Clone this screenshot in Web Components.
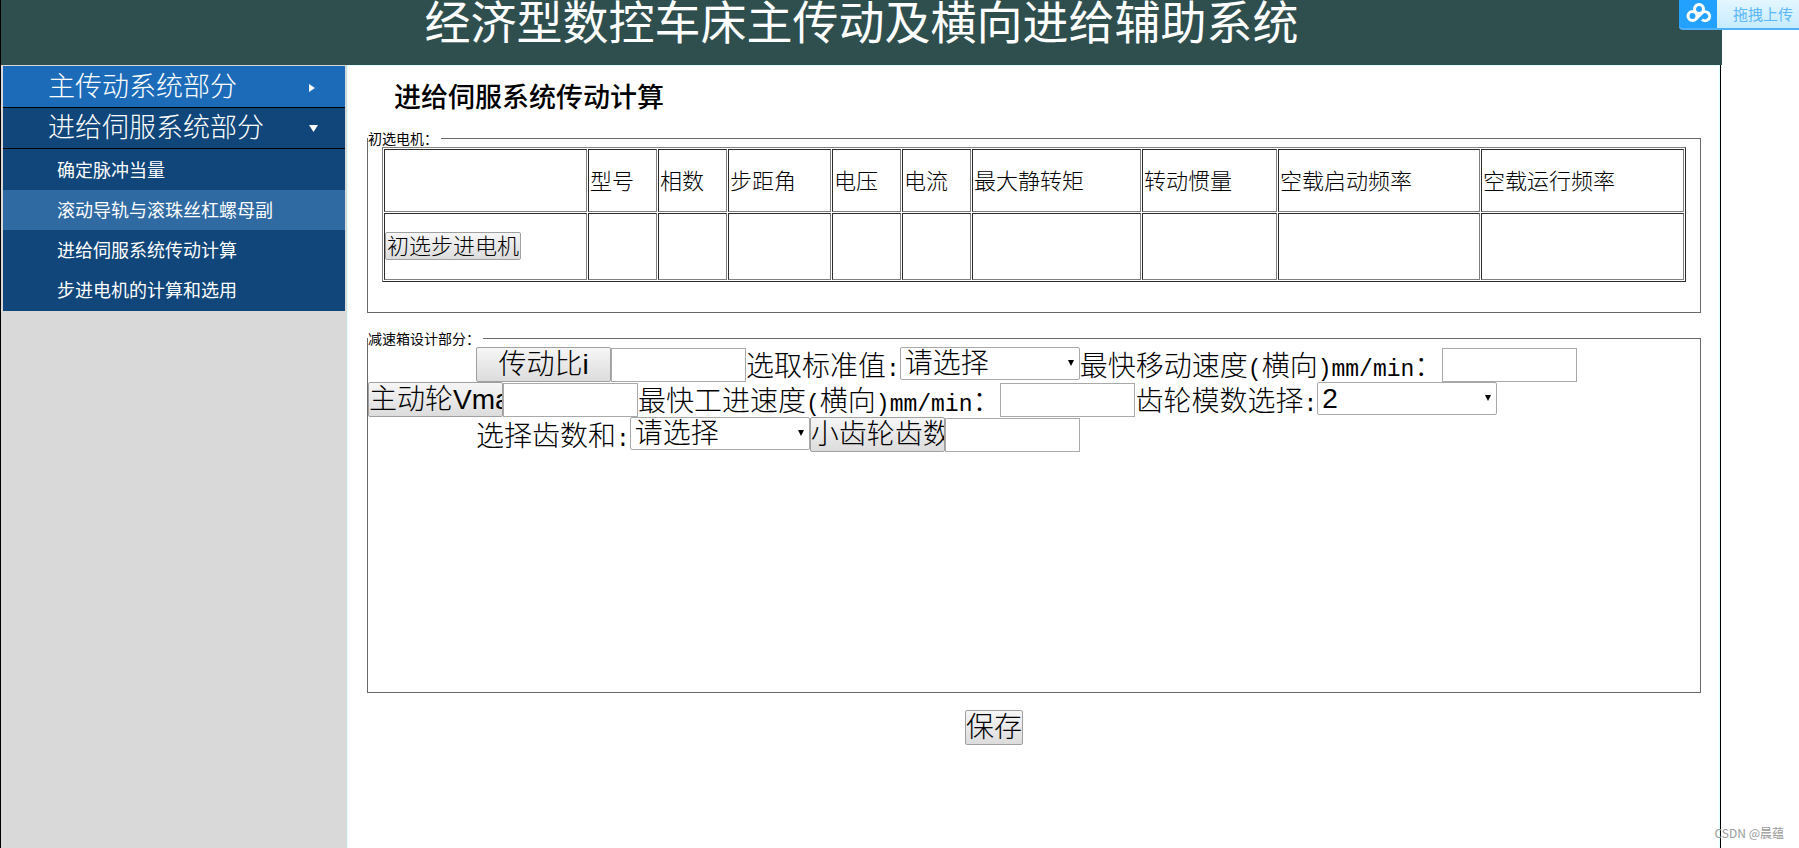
<!DOCTYPE html>
<html lang="zh-CN">
<head>
<meta charset="utf-8">
<title>经济型数控车床主传动及横向进给辅助系统</title>
<style>
    html, body {
        margin: 0;
        min-height: 100%;
    }
    body {
        background: #fff;
        color: #000;
        font-family: "Noto Sans CJK SC", sans-serif;
        font-weight: 300;
    }
</style>
</head>
<body>
<app-shell>
    <side-menu slot="menu">
        <menu-group label="主传动系统部分" active></menu-group>
        <menu-group label="进给伺服系统部分" open>
            <menu-link label="确定脉冲当量"></menu-link>
            <menu-link label="滚动导轨与滚珠丝杠螺母副" current></menu-link>
            <menu-link label="进给伺服系统传动计算"></menu-link>
            <menu-link label="步进电机的计算和选用"></menu-link>
        </menu-group>
    </side-menu>
    <feed-form></feed-form>
</app-shell>
<upload-badge></upload-badge>
<page-mark></page-mark>

<script>
    class BaseElement extends HTMLElement {
        constructor() {
            super();
            this.attachShadow({mode: 'open', delegatesFocus: true});
        }

        connectedCallback() {
            this.shadowRoot.innerHTML = this.getStyle() + this.getTemplate();
        }
    }

    class AppShell extends BaseElement {
        getStyle() {
            return `
                <style>
                    :host {
                        display: flex;
                        flex-direction: column;
                        box-sizing: border-box;
                        min-height: 100vh;
                        margin-right: 77px;
                        border-left: 1px solid #000;
                    }
                    header {
                        padding-bottom: 27px;
                        background: #2f4f4f;
                        color: #fff;
                    }
                    h1 {
                        margin: 0;
                        font-size: 46px;
                        font-weight: 400;
                        line-height: 38px;
                        text-align: center;
                    }
                    .body {
                        display: flex;
                        flex-grow: 1;
                        margin-right: 1px;
                        border-right: 1px solid #000;
                    }
                    main {
                        flex-grow: 1;
                        min-width: 0;
                        border: 1px solid #e0ffff;
                        border-bottom: none;
                    }
                </style>
            `;
        }

        getTemplate() {
            return `
                <header><h1>经济型数控车床主传动及横向进给辅助系统</h1></header>
                <div class="body">
                    <slot name="menu"></slot>
                    <main><slot></slot></main>
                </div>
            `;
        }
    }

    class SideMenu extends BaseElement {
        getStyle() {
            return `
                <style>
                    :host {
                        display: block;
                        box-sizing: border-box;
                        flex: 0 0 346px;
                        padding: 1px 2px;
                        background: #d9d9d9;
                    }
                </style>
            `;
        }

        getTemplate() {
            return `<nav><slot></slot></nav>`;
        }
    }

    class MenuGroup extends BaseElement {
        getStyle() {
            return `
                <style>
                    :host {
                        display: block;
                        background: #10467a;
                        color: #fff;
                    }
                    button {
                        display: flex;
                        align-items: center;
                        box-sizing: border-box;
                        width: 100%;
                        height: 41px;
                        padding: 0 26px 0 45px;
                        border: none;
                        border-bottom: 1px solid #000;
                        background: none;
                        color: inherit;
                        font: inherit;
                        font-size: 27px;
                        line-height: 36px;
                    }
                    :host([active]) button {
                        height: 42px;
                        background: #1b6bb9;
                    }
                    span {
                        flex-grow: 1;
                        padding-bottom: 4px;
                        text-align: left;
                    }
                    svg {
                        width: 10px;
                        height: 10px;
                        fill: #fff;
                    }
                    .items {
                        display: none;
                        padding: 1px 0;
                    }
                    :host([open]) .items {
                        display: block;
                    }
                </style>
            `;
        }

        getTemplate() {
            const open = this.hasAttribute('open');
            const arrow = open ? 'M0 2h9l-4.500 7z' : 'M0 2l6 4-6 4z';
            return `
                <button type="button" aria-expanded="${open}">
                    <span>${this.getAttribute('label')}</span>
                    <svg viewBox="0 0 10 10" aria-hidden="true"><path d="${arrow}"/></svg>
                </button>
                <div class="items"><slot></slot></div>
            `;
        }
    }

    class MenuLink extends BaseElement {
        getStyle() {
            return `
                <style>
                    :host {
                        display: block;
                    }
                    a {
                        display: block;
                        padding: 0 0 2px 54px;
                        color: #fff;
                        font-size: 18px;
                        font-weight: 400;
                        line-height: 38px;
                        text-decoration: none;
                    }
                    :host([current]) a {
                        background: #2f6aa3;
                    }
                </style>
            `;
        }

        getTemplate() {
            return `<a href="#">${this.getAttribute('label')}</a>`;
        }
    }

    class FieldGroup extends BaseElement {
        getStyle() {
            return `
                <style>
                    :host {
                        display: block;
                    }
                    fieldset {
                        box-sizing: border-box;
                        min-width: 0;
                        min-height: var(--group-height, 0);
                        margin: 0;
                        padding: var(--group-padding, 0);
                        border: 1px solid #696969;
                    }
                    legend {
                        margin-left: calc(0px - var(--group-inset, 0px));
                        padding: 0 3px 0 0;
                        font-size: 14px;
                        font-weight: 400;
                        line-height: 17px;
                    }
                </style>
            `;
        }

        getTemplate() {
            return `
                <fieldset>
                    <legend>${this.getAttribute('legend')}</legend>
                    <slot></slot>
                </fieldset>
            `;
        }
    }

    class MotorTable extends BaseElement {
        _columns = [
            ['', 203], ['型号', 69], ['相数', 69], ['步距角', 103], ['电压', 69], ['电流', 69],
            ['最大静转矩', 169], ['转动惯量', 135], ['空载启动频率', 202], ['空载运行频率', 203]
        ];

        getStyle() {
            return `
                <style>
                    :host {
                        display: block;
                    }
                    table {
                        width: 100%;
                        table-layout: fixed;
                        border: 1px solid;
                        border-color: #808080 #2b2b2b #2b2b2b #808080;
                        border-collapse: separate;
                        border-spacing: 1px;
                        font-size: 22px;
                        line-height: 28px;
                    }
                    th, td {
                        box-sizing: border-box;
                        height: 67px;
                        padding: 0 1px 4px;
                        border: 1px solid;
                        border-color: #2b2b2b #808080 #808080 #2b2b2b;
                        font-weight: 300;
                        text-align: left;
                        white-space: nowrap;
                    }
                    thead th, thead td {
                        height: 63px;
                    }
                    tbody td {
                        padding: 0 0 1px;
                    }
                    button {
                        display: block;
                        padding: 0 1px 4px;
                        border: 1px solid #a0a0a0;
                        border-radius: 2px;
                        background: linear-gradient(#f6f6f6, #dcdcdc);
                        color: #000;
                        font: inherit;
                        line-height: 22px;
                    }
                </style>
            `;
        }

        getTemplate() {
            return `
                <table>
                    <colgroup>${this._columns.map(([, width]) => `<col style="width: ${width}px">`).join('')}</colgroup>
                    <thead><tr>${this._columns.map(([title]) => title ? `<th scope="col">${title}</th>` : '<td></td>').join('')}</tr></thead>
                    <tbody><tr>
                        <td><button type="button">初选步进电机</button></td>
                        ${'<td></td>'.repeat(this._columns.length - 1)}
                    </tr></tbody>
                </table>
            `;
        }
    }

    // Shared look of everything that sits in a form row
    class FormControl extends BaseElement {
        getStyle() {
            return `
                <style>
                    :host {
                        display: flex;
                        flex-shrink: 0;
                        align-items: flex-end;
                        height: 35px;
                        font-size: 28px;
                        line-height: 35px;
                        white-space: nowrap;
                    }
                    .latin {
                        font-family: "Liberation Mono", monospace;
                        font-size: 23px;
                        line-height: 1;
                    }
                    input, select, button {
                        box-sizing: border-box;
                        margin: 0;
                        border: 1px solid #a9a9a9;
                        color: #000;
                        font-family: "Liberation Sans", "Noto Sans CJK SC", sans-serif;
                        font-size: 28px;
                        font-weight: 300;
                    }
                    input {
                        width: 135px;
                        height: 34px;
                        padding: 1px;
                        background: #fff;
                    }
                    button {
                        height: 35px;
                        padding: 0;
                        border-color: #a0a0a0;
                        border-radius: 2px;
                        background: linear-gradient(#f6f6f6, #dcdcdc);
                        line-height: 33px;
                        overflow: hidden;
                    }
                    .action {
                        width: 135px;
                    }
                    .choice {
                        position: relative;
                        align-self: flex-start;
                        height: 33px;
                    }
                    select {
                        display: block;
                        width: 180px;
                        height: 33px;
                        padding: 0 4px;
                        border-radius: 2px;
                        background: #fff;
                        line-height: 31px;
                        appearance: none;
                    }
                    svg {
                        position: absolute;
                        top: 13px;
                        right: 6px;
                        width: 6px;
                        height: 6px;
                        pointer-events: none;
                    }
                </style>
            `;
        }

        getLabel() {
            const text = this.getAttribute('label').replace(/[\x21-\x7e]+/g, '<span class="latin">$&</span>');
            return `<label for="control">${text}</label>`;
        }
    }

    class TextField extends FormControl {
        getTemplate() {
            return `${this.getLabel()}<input id="control" type="text">`;
        }
    }

    class ChoiceField extends FormControl {
        getTemplate() {
            return `
                ${this.getLabel()}
                <div class="choice">
                    <select id="control"><option>${this.getAttribute('value')}</option></select>
                    <svg viewBox="0 0 6 6" aria-hidden="true"><path d="M0 0h6l-3 6z"/></svg>
                </div>
            `;
        }
    }

    class CalcField extends FormControl {
        getTemplate() {
            const action = this.getAttribute('action');
            return `
                <button class="action" type="button">${action}</button>
                <input type="text" aria-label="${action}">
            `;
        }
    }

    class SaveButton extends FormControl {
        getTemplate() {
            return `<button type="button">保存</button>`;
        }
    }

    class FeedForm extends BaseElement {
        getStyle() {
            return `
                <style>
                    :host {
                        display: block;
                        padding: 9px 18px 20px 19px;
                    }
                    h2 {
                        margin: 0 0 13px 27px;
                        font-size: 27px;
                        font-weight: 500;
                        line-height: 42px;
                    }
                    form {
                        display: flex;
                        flex-direction: column;
                        gap: 17px;
                    }
                    .motor {
                        --group-inset: 14px;
                        --group-padding: 0 14px 30px;
                    }
                    .gearbox {
                        --group-height: 363px;
                    }
                    .row {
                        display: flex;
                    }
                    .indent {
                        padding-left: 108px;
                    }
                    .footer {
                        display: flex;
                        justify-content: center;
                        padding-right: 80px;
                    }
                </style>
            `;
        }

        getTemplate() {
            return `
                <h2>进给伺服系统传动计算</h2>
                <form>
                    <field-group class="motor" legend="初选电机：">
                        <motor-table></motor-table>
                    </field-group>
                    <field-group class="gearbox" legend="减速箱设计部分：">
                        <div class="row indent">
                            <calc-field action="传动比i"></calc-field>
                            <choice-field label="选取标准值:" value="请选择"></choice-field>
                            <text-field label="最快移动速度(横向)mm/min："></text-field>
                        </div>
                        <div class="row">
                            <calc-field action="主动轮Vmax"></calc-field>
                            <text-field label="最快工进速度(横向)mm/min："></text-field>
                            <choice-field label="齿轮模数选择:" value="2"></choice-field>
                        </div>
                        <div class="row indent">
                            <choice-field label="选择齿数和:" value="请选择"></choice-field>
                            <calc-field action="小齿轮齿数"></calc-field>
                        </div>
                    </field-group>
                    <div class="footer"><save-button></save-button></div>
                </form>
            `;
        }
    }

    class UploadBadge extends BaseElement {
        getStyle() {
            return `
                <style>
                    :host {
                        position: absolute;
                        top: 0;
                        right: 0;
                    }
                    button {
                        display: flex;
                        width: 120px;
                        height: 30px;
                        padding: 0;
                        border: none;
                        border-bottom: 2px solid #4fb1f9;
                        border-bottom-left-radius: 4px;
                        background: linear-gradient(#e4f6ff, #c6ecff);
                        color: #5bb8fc;
                        font: inherit;
                        font-size: 15px;
                        font-weight: 400;
                        line-height: 28px;
                        overflow: hidden;
                    }
                    svg {
                        flex-shrink: 0;
                        width: 38px;
                        height: 30px;
                        background: #22a1ff;
                        fill: none;
                        stroke: #fff;
                        stroke-width: 3;
                    }
                    span {
                        padding-left: 16px;
                        white-space: nowrap;
                    }
                </style>
            `;
        }

        getTemplate() {
            return `
                <button type="button">
                    <svg viewBox="0 0 38 30" aria-hidden="true">
                        <circle cx="20" cy="9" r="4.500"/>
                        <circle cx="13.500" cy="16" r="4.500"/>
                        <path d="M17 19l6-6a4.500 4.500 0 1 1 0 6.500"/>
                    </svg>
                    <span>拖拽上传</span>
                </button>
            `;
        }
    }

    class PageMark extends BaseElement {
        getStyle() {
            return `
                <style>
                    :host {
                        position: absolute;
                        right: 15px;
                        bottom: 6px;
                        color: #999;
                        font-size: 12px;
                        font-weight: 400;
                        line-height: 18px;
                    }
                </style>
            `;
        }

        getTemplate() {
            return `CSDN @晨蕴`;
        }
    }

    customElements.define('app-shell', AppShell);
    customElements.define('side-menu', SideMenu);
    customElements.define('menu-group', MenuGroup);
    customElements.define('menu-link', MenuLink);
    customElements.define('field-group', FieldGroup);
    customElements.define('motor-table', MotorTable);
    customElements.define('text-field', TextField);
    customElements.define('choice-field', ChoiceField);
    customElements.define('calc-field', CalcField);
    customElements.define('save-button', SaveButton);
    customElements.define('feed-form', FeedForm);
    customElements.define('upload-badge', UploadBadge);
    customElements.define('page-mark', PageMark);
</script>
</body>
</html>
